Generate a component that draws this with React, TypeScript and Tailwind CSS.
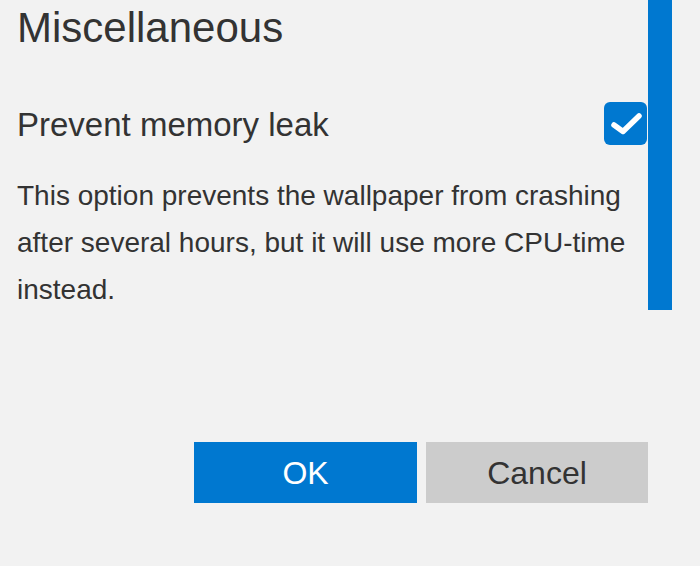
import React from "react";

export default function App() {
  return (
    <div
      className="w-[700px] h-[566px] bg-[#f2f2f2] flex flex-col overflow-hidden text-[#333333]"
      style={{ fontFamily: '"Liberation Sans", Arial, sans-serif' }}
    >
      <div className="flex h-[310px]">
        <div className="flex-1 pl-[17px] flex flex-col">
          <div className="mt-[4px] text-[42px] leading-[48px]">Miscellaneous</div>
          <div className="mt-[52px] flex items-start justify-between">
            <div className="mt-[1px] text-[33px] leading-[40px]">Prevent memory leak</div>
            <div className="w-[43px] h-[43px] mt-[-2px] mr-[1px] rounded-[6px] bg-[#0078d0] flex items-center justify-center">
              <svg width="43" height="43" viewBox="0 0 43 43">
                <path
                  d="M10 23 L19 29.5 L35 14"
                  fill="none"
                  stroke="#ffffff"
                  strokeWidth="5.5"
                  strokeLinecap="round"
                  strokeLinejoin="round"
                />
              </svg>
            </div>
          </div>
          <div className="mt-[27px] text-[28px] leading-[47px]">
            <span className="block">This option prevents the wallpaper from crashing</span>
            <span className="block">after several hours, but it will use more CPU-time</span>
            <span className="block">instead.</span>
          </div>
        </div>
        <div className="w-[24px] bg-[#0078d0]" />
        <div className="w-[28px]" />
      </div>
      <div className="mt-[132px] flex justify-end gap-[9px] pr-[52px]">
        <button className="w-[223px] h-[61px] bg-[#0078d0] text-white text-[32px] leading-none flex items-center justify-center">
          OK
        </button>
        <button className="w-[222px] h-[61px] bg-[#cccccc] text-[#333333] text-[32px] leading-none flex items-center justify-center">
          Cancel
        </button>
      </div>
    </div>
  );
}
